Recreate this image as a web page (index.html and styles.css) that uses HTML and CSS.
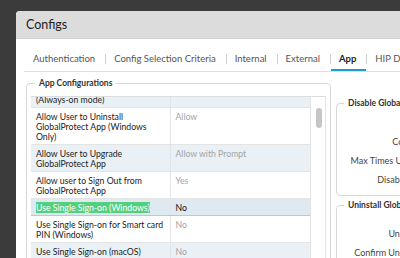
FILE: index.html
```html
<!DOCTYPE html>
<html lang="en">
  <head>
    <meta charset="UTF-8" />
    <title>Configs</title>
    <link rel="stylesheet" href="styles.css">
  </head>
  <body>
    <div class="modal">
      <div class="modal-header">Configs</div>
      <div class="modal-body">
        <div class="tabs">
          <span class="tab">Authentication</span>
          <span class="sep"></span>
          <span class="tab">Config Selection Criteria</span>
          <span class="sep"></span>
          <span class="tab">Internal</span>
          <span class="sep"></span>
          <span class="tab">External</span>
          <span class="sep"></span>
          <span class="tab active">App</span>
          <span class="sep"></span>
          <span class="tab">HIP Data Collection</span>
        </div>

        <div class="panes">
          <fieldset class="group app-config">
            <legend>App Configurations</legend>
            <div class="grid">
              <div class="grid-scroll">
                <table class="config-table">
                  <tr class="alt">
                    <td class="name">Allow User to Disable GlobalProtect App<br>(Always-on mode)</td>
                    <td class="value">Allow</td>
                  </tr>
                  <tr>
                    <td class="name">Allow User to Uninstall GlobalProtect App (Windows Only)</td>
                    <td class="value">Allow</td>
                  </tr>
                  <tr class="alt">
                    <td class="name">Allow User to Upgrade GlobalProtect App</td>
                    <td class="value">Allow with Prompt</td>
                  </tr>
                  <tr>
                    <td class="name">Allow user to Sign Out from GlobalProtect App</td>
                    <td class="value">Yes</td>
                  </tr>
                  <tr class="selected">
                    <td class="name"><mark>Use Single Sign-on (Windows)</mark></td>
                    <td class="value">No</td>
                  </tr>
                  <tr>
                    <td class="name">Use Single Sign-on for Smart card PIN (Windows)</td>
                    <td class="value">No</td>
                  </tr>
                  <tr class="alt">
                    <td class="name">Use Single Sign-on (macOS)</td>
                    <td class="value">No</td>
                  </tr>
                  <tr>
                    <td class="name">Clear Single Sign-On Credentials on Logout (Windows Only)</td>
                    <td class="value">Yes</td>
                  </tr>
                </table>
              </div>
              <div class="scrollbar"><div class="thumb"></div></div>
            </div>
          </fieldset>

          <div class="side">
            <fieldset class="group disable-group">
              <legend>Disable GlobalProtect App</legend>
              <div class="form-row"><label>Passcode</label><span class="input"></span></div>
              <div class="form-row"><label>Confirm Passcode</label><span class="input"></span></div>
              <div class="form-row"><label>Max Times User Can Disable</label><span class="input"></span></div>
              <div class="form-row"><label>Disable Timeout (min)</label><span class="input"></span></div>
            </fieldset>
            <fieldset class="group uninstall-group">
              <legend>Uninstall GlobalProtect App</legend>
              <div class="form-row"><label>Uninstall</label><span class="input"></span></div>
              <div class="form-row"><label>Uninstall Password</label><span class="input"></span></div>
              <div class="form-row"><label>Confirm Uninstall Password</label><span class="input"></span></div>
            </fieldset>
          </div>
        </div>
      </div>
    </div>
  </body>
</html>
```

FILE: styles.css
```css
* {
  margin: 0;
  padding: 0;
  box-sizing: border-box;
}

body {
  font-family: Lato, "Open Sans", sans-serif;
  background: #3b3b3b;
  color: #333;
  overflow: hidden;
}

.modal {
  margin: 11px 0 0 16px;
  width: 680px;
  height: 320px;
  background: #fff;
  border-radius: 4px 0 0 0;
  overflow: hidden;
}

.modal-header {
  height: 28px;
  padding-left: 10px;
  background: #dcdcdc;
  border-bottom: 1px solid #d0d0d0;
  color: #222;
  font-size: 12.5px;
  line-height: 27px;
}

.modal-body {
  padding: 8px 8px 0;
}

/* Tabs */
.tabs {
  display: flex;
  border-bottom: 1px solid #dedede;
}

.tab {
  height: 24px;
  padding: 0 10px 0 8px;
  color: #555;
  font-size: 9.5px;
  line-height: 24px;
  white-space: nowrap;
}

.tab:first-child {
  padding-left: 9px;
}

.tab.active {
  color: #222;
  font-weight: 700;
  box-shadow: inset 0 -2px #1e9ad6;
}

.sep {
  align-self: center;
  flex: none;
  width: 1px;
  height: 10px;
  background: #d0d0d0;
}

/* Panes */
.panes {
  display: flex;
  gap: 5px;
  padding: 6px 0 0 2px;
}

.group {
  border: 1px solid #d8d8d8;
  border-radius: 4px;
}

.group legend {
  margin-left: 4px;
  padding: 0 4px;
  color: #333;
  font-size: 8.5px;
  font-weight: 700;
  line-height: 10px;
}

.app-config {
  flex: none;
  width: 304px;
  height: 230px;
  padding: 8px 4px 0;
}

.grid {
  display: flex;
  border-top: 1px solid #dcdcdc;
  height: 220px;
}

.grid-scroll {
  width: 279px;
  overflow: hidden;
}

.config-table {
  width: 279px;
  margin-top: -26px;
  border-collapse: collapse;
  table-layout: fixed;
  font-size: 8.7px;
  line-height: 10px;
}

.config-table td {
  padding: 4px 3px 2px 5px;
  vertical-align: top;
  border-bottom: 1px solid #e4e4e4;
}

.config-table .name {
  width: 139px;
  color: #222;
  border-right: 1px solid #e4e4e4;
}

.config-table .value {
  color: #a3a3a3;
}

.config-table tr.alt td {
  background: #eaf1f6;
}

.config-table tr.selected td {
  background: #dee9f1;
  border-top: 1px solid #a8cde6;
  border-bottom: 1px solid #a8cde6;
}

.config-table tr.selected .value {
  color: #111;
}

.config-table mark {
  background: #52d07f;
  color: #fff;
}

.scrollbar {
  width: 16px;
  border-left: 1px solid #e4e4e4;
  border-right: 1px solid #e4e4e4;
  padding: 11px 0 0 5px;
}

.thumb {
  width: 6px;
  height: 20px;
  border-radius: 3px;
  background: #c6c6c6;
}

/* Side forms */
.side {
  display: flex;
  flex-direction: column;
  gap: 4px;
  margin-top: 20px;
}

.side .group {
  width: 300px;
  padding: 5px 4px 6px;
}

.side .group legend {
  margin-left: 3px;
}

.side .uninstall-group {
  padding-top: 0;
}

.uninstall-group .form-row:first-of-type {
  margin-top: -5px;
}

.form-row {
  display: flex;
  align-items: center;
  height: 19px;
}

.form-row label {
  flex: none;
  width: 128px;
  padding-right: 6px;
  text-align: right;
  color: #444;
  font-size: 9px;
  white-space: nowrap;
}

.input {
  width: 120px;
  height: 15px;
  border: 1px solid #ccc;
  border-radius: 2px;
}
```
